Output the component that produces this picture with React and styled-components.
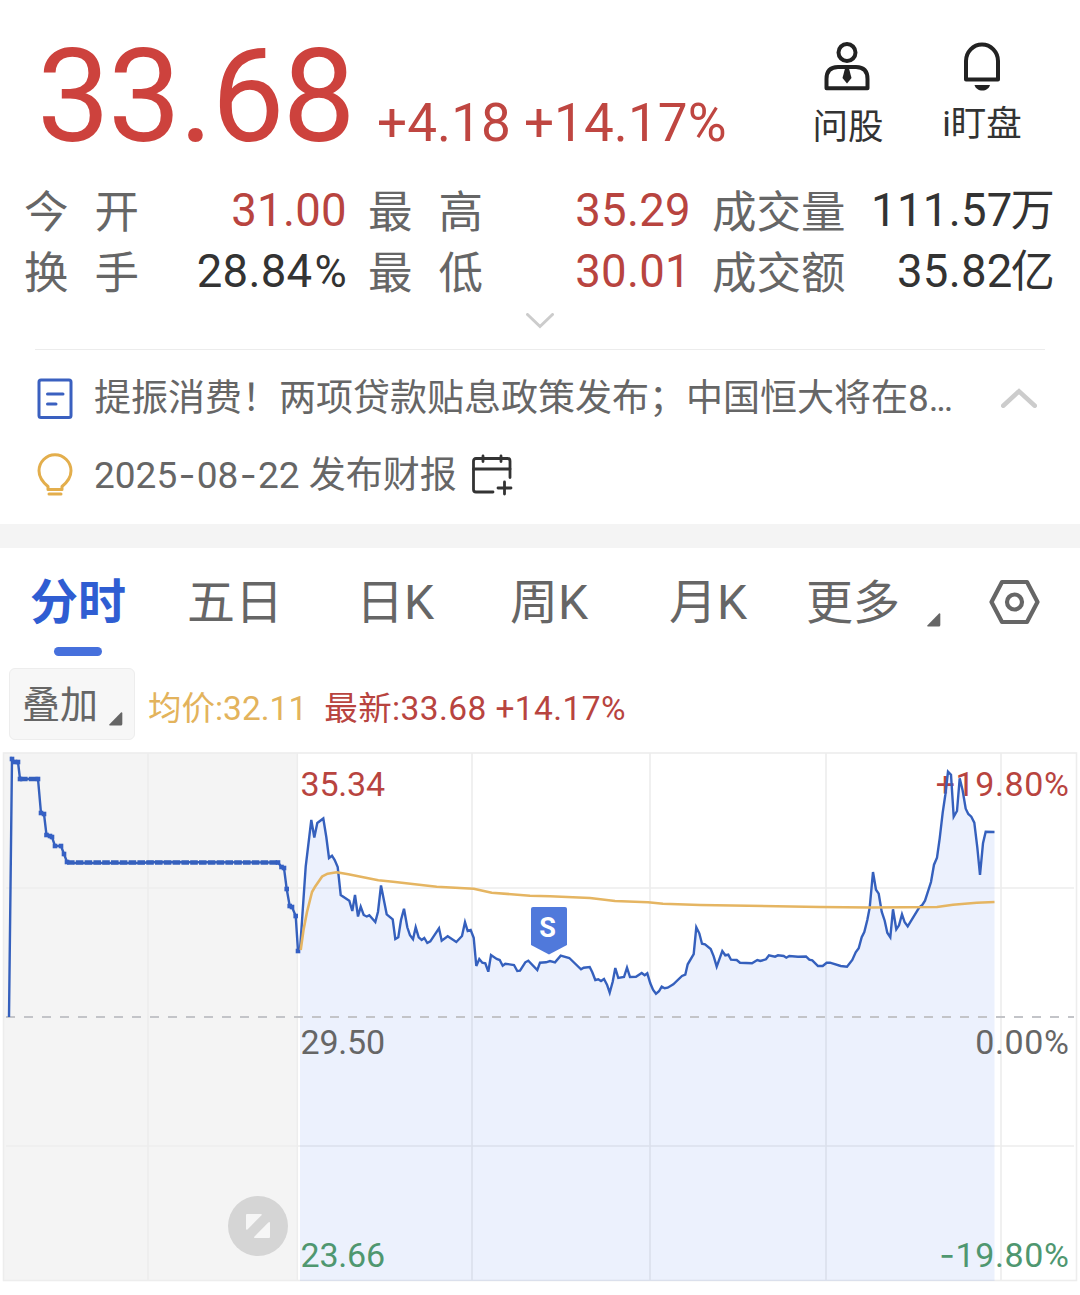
import React from "react";
import styled, { createGlobalStyle } from "styled-components";

const GlobalStyle = createGlobalStyle`
    * {
        box-sizing: border-box;
    }
    body {
        margin: 0;
        background: #fff;
        font-family: Roboto, "Noto Sans CJK SC", sans-serif;
        color: #666;
    }
    svg {
        display: block;
        flex-shrink: 0;
    }
`;

const RED = "#b8443f";

const stats = [
    [
        { label: "今开", value: "31.00", up: true },
        { label: "换手", value: "28.84", unit: "%" },
    ],
    [
        { label: "最高", value: "35.29", up: true },
        { label: "最低", value: "30.01", up: true },
    ],
    [
        { label: "成交量", value: "111.57", unit: "万" },
        { label: "成交额", value: "35.82", unit: "亿" },
    ],
];

const tabs = [
    { name: "分时", width: 157, active: true },
    { name: "五日", width: 169 },
    { name: "日K", width: 154 },
    { name: "周K", width: 159 },
    { name: "月K", width: 137 },
];

// pre-market auction
const auction = [
    [9, 1017], [12, 759], [15, 762], [18, 762], [20, 779], [38, 779],
    [41, 813], [44, 814], [46.5, 835], [50, 836], [52, 837], [55, 846],
    [61, 846], [64, 854], [67, 862], [74, 863], [144, 863], [148, 862], [278, 862.5],
    [281.5, 867], [284, 868], [286.7, 889], [289.7, 906], [292, 907],
    [295.7, 916], [298, 951],
];

const auctionDots = auction.filter(([x]) => x > 9 && (x < 70 || x > 270));

const price = [
    [300, 950], [305.7, 866.7], [311.3, 820], [314.3, 837.5], [317.3, 823],
    [323.3, 818.5], [326.3, 837], [329, 858], [332, 855.7], [334.7, 860],
    [337.7, 867], [340.7, 895], [349.3, 900.7], [352.3, 911], [355, 895],
    [358, 916.5], [360.7, 906.7], [363.7, 915], [366.7, 916.5], [369.3, 915.3],
    [375.3, 922], [378, 911.7], [381, 885.5], [386.7, 914.3], [392.7, 919.3],
    [395.3, 939], [398.3, 937.3], [401, 920], [404, 908.7], [407.3, 927.3],
    [410, 935.3], [413, 939.3], [415.7, 927.3], [418.7, 937.3], [421.7, 940],
    [424.3, 938], [427.3, 943], [430.3, 941.3], [439, 928.3], [441.7, 940.7],
    [447.7, 936.3], [456.3, 942], [462, 936], [465, 922.3], [467.7, 931],
    [470.7, 930], [473.7, 937.7], [476.3, 966], [479.3, 959], [482.3, 962.7],
    [485.3, 963.3], [488.3, 971.7], [491, 955], [496.7, 959], [499.7, 960],
    [502.7, 965.7], [505.3, 963.7], [514, 965], [517.3, 971], [520, 970.7],
    [525.3, 962.3], [528.3, 960.7], [537.3, 970], [540, 962.7], [546, 962.3],
    [550, 961], [555, 962.3], [560.7, 955.7], [569.3, 958], [581, 969.3],
    [583.7, 967.7], [589.7, 967], [592.3, 972.3], [595.3, 980], [598.3, 979.3],
    [601, 981], [604, 979], [607, 984.7], [609.7, 992.7], [612.7, 981.7],
    [615.3, 968], [618.3, 978], [624, 977], [627, 967.7], [630, 977],
    [636, 976.7], [641.7, 973], [644.7, 975.3], [647.3, 973.3], [650.3, 983.3],
    [653, 989.7], [656, 993.7], [659, 991.3], [661.7, 986.7], [664.7, 988.3],
    [667.7, 987.7], [673.3, 984.3], [682, 976], [685.3, 974.7], [687.7, 964.3],
    [693.7, 954], [696.3, 927.3], [699.3, 933.3], [702, 943.7], [705, 944.3],
    [710.7, 949], [713.7, 956.3], [716.7, 966.7], [722.3, 951], [725.3, 955.3],
    [728.3, 954.7], [731, 959.7], [736.7, 960], [740, 962.7], [752, 963.3],
    [757.3, 960], [760.3, 961], [766, 959.3], [769, 955.3], [775, 956.7],
    [778, 955.3], [783.7, 956], [786.3, 957.7], [789.3, 956], [798, 956.7],
    [806, 956.5], [809.3, 959.7], [812.3, 960.3], [818, 966], [822.7, 966],
    [826.7, 962.7], [830, 962.7], [840.7, 966], [847, 966.7], [852.3, 960],
    [855.7, 952.3], [858.7, 948.3], [861.7, 937.3], [864.3, 932], [867.3, 920],
    [869.7, 907.7], [873, 872], [876, 889.7], [878.7, 893.7], [881.7, 911.7],
    [884.7, 920.7], [887.3, 932.7], [890.3, 937.3], [893, 909.3], [896.3, 929.3],
    [899, 925.3], [902, 914.3], [904.7, 922.3], [907.7, 926.3], [919.3, 907.3],
    [922.3, 905], [925, 900.7], [931, 882], [934, 864.7], [937, 857.7],
    [939.7, 838.3], [942.7, 812.7], [945.3, 795], [948, 771.7], [951, 774.7],
    [953.7, 816.7], [957, 811], [959.7, 778.3], [962.7, 790.7], [965.7, 808.7],
    [968.3, 814], [971.3, 816.7], [974.3, 822.7], [977.3, 847.3], [980, 875],
    [983, 843.3], [985.7, 831.7], [994.5, 832],
];

const average = [
    [300.7, 950], [303.5, 930], [307, 912], [312, 892], [314.7, 887.3], [322.3, 876.3],
    [327.7, 873.7], [336.7, 872.3], [348.3, 874.3], [378.3, 880.3],
    [393, 881.7], [436.7, 886.7], [473.7, 888.7], [491.7, 892.7], [530, 895.7],
    [550, 896.3], [590, 898], [615, 901], [648, 902.3], [663, 903.7],
    [700, 905], [820, 907], [870, 907.5], [937, 907], [953, 904.7],
    [976.7, 902.7], [994.5, 902],
];

const toPoints = (list) => list.map((p) => p.join(",")).join(" ");

const AdvisorIcon = () => (
    <svg width="50" height="50" viewBox="0 0 50 50" fill="none" stroke="#222" strokeWidth="4">
        <circle cx="24" cy="10.500" r="8.500" />
        <path d="M3.500 46.300V37Q3.500 25 15 25H33Q44.500 25 44.500 37V46.300Z" strokeLinejoin="round" />
        <path d="M22 26.500h4l2.500 9.500-4.500 5.500-4.500-5.500z" fill="#222" stroke="none" />
    </svg>
);

const BellIcon = () => (
    <svg width="48" height="50" viewBox="0 0 48 50" fill="none" stroke="#222" strokeWidth="4">
        <path d="M8 37.500V19a16 16.500 0 0 1 32 0V37.500z" strokeLinejoin="round" />
        <path d="M16.500 43h15.500c-1 3.600-4 5.500-7.700 5.500s-6.800-1.900-7.800-5.500z" fill="#222" stroke="none" />
    </svg>
);

const NewsIcon = () => (
    <svg width="36" height="42" viewBox="0 0 36 42" fill="none" stroke="#3a60c0" strokeWidth="3">
        <rect x="2" y="2" width="32" height="37.500" rx="2" />
        <path d="M10.500 16h15.500M10.500 26h8.500" strokeLinecap="round" />
    </svg>
);

const BulbIcon = () => (
    <svg width="36" height="44" viewBox="0 0 36 44" fill="none" stroke="#e3ae4c" strokeWidth="3">
        <path d="M11 36.500v-3C6 29.500 2 25 2 17.800a16 16 0 0 1 32 0C34 25 30 29.500 25 33.500v3z" strokeLinejoin="round" />
        <path d="M12 41h12" strokeLinecap="round" />
    </svg>
);

const CalendarIcon = () => (
    <svg width="42" height="42" viewBox="0 0 42 42" fill="none" stroke="#333" strokeWidth="2.800" strokeLinecap="round">
        <path d="M39 23.500V7q0-2.500-2.500-2.500H5Q2.500 4.500 2.500 7V35.500q0 2.500 2.500 2.500H22" />
        <path d="M2.500 15h36.500M12 2v5.500M30 2v5.500M33.500 28v12M27 34h13" />
    </svg>
);

const SettingsIcon = () => (
    <svg width="52" height="48" viewBox="0 0 52 48" fill="none" stroke="#666" strokeWidth="4.200">
        <path d="M13 4h25L48.500 24 38 44H13L2.500 24z" strokeLinejoin="round" />
        <circle cx="25.500" cy="24" r="7.500" />
    </svg>
);

const Chevron = ({ width, height, stroke, up }) => (
    <svg width={width} height={height} viewBox={`0 0 ${width} ${height}`} fill="none" stroke="#ccc" strokeWidth={stroke} strokeLinecap="round">
        <path
            d={
                up
                    ? `M${stroke / 2} ${height - stroke / 2}L${width / 2} ${stroke / 2 + 1}L${width - stroke / 2} ${height - stroke / 2}`
                    : `M${stroke / 2} ${stroke / 2}L${width / 2} ${height - stroke / 2 - 1}L${width - stroke / 2} ${stroke / 2}`
            }
        />
    </svg>
);

const Corner = () => (
    <svg width="14" height="14" viewBox="0 0 14 14">
        <path d="M12 .5q1.300-.8 1.300.8V12q0 1.500-1.500 1.500H1Q-.5 13.500.5 12.300z" fill="#666" />
    </svg>
);

const Chart = () => (
    <svg width="1080" height="547" viewBox="0 748 1080 547">
        <rect x="3" y="753" width="294" height="528" fill="#f4f4f4" />
        <g stroke="#ededed" strokeWidth="1.600" fill="none">
            <rect x="3.500" y="753" width="1073" height="527.500" />
            <path d="M6 888H1074M6 1146H1074" />
            <path d="M148 753V1280M297.300 753V1280M472 753V1280M650 753V1280M826 753V1280M1001 753V1280" />
        </g>
        <polygon points={`300,1281 ${toPoints(price)} 994.5,1281`} fill="#3a66ee" fillOpacity="0.095" />
        <path d="M6 1017H1074" stroke="#c3c4c8" strokeWidth="2" strokeDasharray="9 9" />

        <AxisText x="300.500" y="795.500" fill={RED}>35.34</AxisText>
        <AxisText x="300.500" y="1053.500" fill="#666">29.50</AxisText>
        <AxisText x="300.500" y="1266.500" fill="#4f9770">23.66</AxisText>
        <AxisText x="1069.500" y="795.500" fill={RED} $end>+19.80%</AxisText>
        <AxisText x="1069.500" y="1053.500" fill="#666" $end>0.00%</AxisText>
        <AxisText x="1069.500" y="1266.500" fill="#4f9770" $end>
            <tspan fontFamily="Inter">-</tspan>19.80%
        </AxisText>

        <g fill="none" stroke="#3560bd" strokeWidth="2.400">
            <polyline points={toPoints(auction)} />
            <path d="M67 862.500H278M20 779H38" strokeWidth="4.600" strokeDasharray="7.600 1.200" />
            <polyline points={toPoints(price)} />
        </g>
        {auctionDots.map(([x, y]) => (
            <rect key={x} x={x - 2.3} y={y - 2.3} width="4.600" height="4.600" fill="#3560c4" />
        ))}
        <polyline points={toPoints(average)} fill="none" stroke="#e5b562" strokeWidth="2.600" strokeLinejoin="round" />

        <path d="M533 907h32q2 0 2 2v36l-18 9.500-18-9.500v-36q0-2 2-2z" fill="#5079db" />
        <MarkerText x="547.500" y="937" textAnchor="middle">S</MarkerText>

        <circle cx="258" cy="1226" r="30" fill="#d5d5d5" />
        <path d="M247 1214h14q1.500 0 .5 1.200l-13.800 14q-1.700 1.300-1.700-.7V1215q0-1 1-1z" fill="#f6f6f6" />
        <path d="M270 1223v14q0 1-1 1h-14q-1.500 0-.5-1.500l13.800-14q1.700-1.300 1.700.5z" fill="#f6f6f6" />
    </svg>
);

const App = () => {
    return (
        <Page>
            <GlobalStyle />
            <Header>
                <Quote>
                    <Price>33.68</Price>
                    <Change>+4.18</Change>
                    <Change>+14.17%</Change>
                </Quote>
                <Actions>
                    <Action $gap={15}>
                        <AdvisorIcon />
                        <span>问股</span>
                    </Action>
                    <Action $gap={12}>
                        <BellIcon />
                        <span>i盯盘</span>
                    </Action>
                </Actions>
            </Header>

            <Stats>
                {stats.map((column, i) => (
                    <div key={i}>
                        {column.map((item) => (
                            <StatRow key={item.label}>
                                <StatLabel>
                                    {[...item.label].map((char) => (
                                        <span key={char}>{char}</span>
                                    ))}
                                </StatLabel>
                                <StatValue $up={item.up}>
                                    {item.value}
                                    {item.unit && <Unit $wide={item.unit === "%"}>{item.unit}</Unit>}
                                </StatValue>
                            </StatRow>
                        ))}
                    </div>
                ))}
            </Stats>
            <Expand>
                <Chevron width={28} height={16} stroke={3} />
            </Expand>

            <Notices>
                <Notice $height={78}>
                    <NewsIcon />
                    <NoticeText>
                        提振消费！两项贷款贴息政策发布；中国恒大将在8<Dots>...</Dots>
                    </NoticeText>
                    <Collapse>
                        <Chevron up width={36} height={20} stroke={4.5} />
                    </Collapse>
                </Notice>
                <Notice $height={74}>
                    <BulbIcon />
                    <NoticeText>
                        2025<Dash>-</Dash>08<Dash>-</Dash>22 发布财报
                    </NoticeText>
                    <CalendarIcon />
                </Notice>
            </Notices>
            <Band />

            <Tabs>
                {tabs.map((tab) => (
                    <Tab key={tab.name} $width={tab.width} $active={tab.active}>
                        {tab.name}
                    </Tab>
                ))}
                <More>
                    更多
                    <Corner />
                </More>
                <SettingsIcon />
            </Tabs>

            <Legend>
                <OverlayButton>
                    叠加
                    <Corner />
                </OverlayButton>
                <LegendText $color="#e3b35c">均价:32.11</LegendText>
                <LegendText $color={RED} $spacing={0.4}>
                    最新:33.68 +14.17%
                </LegendText>
            </Legend>
            <Chart />
        </Page>
    );
};

const Page = styled.div`
    width: 1080px;
    height: 1295px;
    overflow: hidden;
    background: #fff;
`;

const Header = styled.div`
    display: flex;
    justify-content: space-between;
    height: 180px;
    padding: 31px 48px 0 37px;
`;

const Quote = styled.div`
    display: flex;
    align-items: baseline;
    height: 130px;
    white-space: nowrap;
`;

const Price = styled.div`
    width: 340px;
    font-size: 130px;
    line-height: 131px;
    letter-spacing: -2px;
    color: #cd423d;
`;

const Change = styled.div`
    margin-right: 13px;
    font-size: 53px;
    line-height: 60px;
    letter-spacing: 0.1px;
    color: #bf4641;
`;

const Actions = styled.div`
    display: flex;
    gap: 34px;
    padding-top: 11px;
`;

const Action = styled.div`
    display: flex;
    flex-direction: column;
    align-items: center;
    width: 100px;
    color: #333;
    font-size: 35.5px;
    line-height: 40px;
    span {
        margin-top: ${({ $gap }) => $gap}px;
    }
`;

const Stats = styled.div`
    display: grid;
    grid-template-columns: 323px 323px 343px;
    column-gap: 21px;
    padding-left: 24px;
`;

const StatRow = styled.div`
    display: flex;
    justify-content: space-between;
    height: 61px;
    line-height: 62px;
    white-space: nowrap;
`;

const StatLabel = styled.div`
    display: flex;
    justify-content: space-between;
    min-width: 115px;
    padding-top: 2px;
    font-size: 44.5px;
`;

const StatValue = styled.div`
    font-size: 45.5px;
    letter-spacing: 0.3px;
    color: ${({ $up }) => ($up ? RED : "#333")};
`;

const Unit = styled.span`
    margin-left: ${({ $wide }) => ($wide ? 2 : -2)}px;
    font-size: 44px;
`;

const Expand = styled.div`
    display: flex;
    justify-content: center;
    height: 47px;
    padding-top: 11px;
`;

const Notices = styled.div`
    height: 175px;
    margin: 0 35px;
    border-top: 1px solid #ececec;
    padding-top: 10px;
`;

const Notice = styled.div`
    display: flex;
    align-items: center;
    height: ${({ $height }) => $height}px;
    padding-left: 2px;
`;

const NoticeText = styled.div`
    margin: 0 14px 0 21px;
    font-size: 37px;
    line-height: 50px;
    white-space: nowrap;
`;

const Dash = styled.span`
    margin: 0 1.3px;
    font-family: Inter;
`;

const Dots = styled.span`
    letter-spacing: -2.3px;
`;

const Collapse = styled.div`
    margin-left: auto;
    padding: 0 8px 2px 0;
`;

const Band = styled.div`
    height: 24px;
    background: #f4f4f4;
`;

const Tabs = styled.div`
    display: flex;
    align-items: flex-start;
    height: 120px;
    padding: 30px 0 0 30px;
    font-size: 48px;
    line-height: 50px;
    white-space: nowrap;
`;

const Tab = styled.div`
    width: ${({ $width }) => $width}px;
    ${({ $active }) =>
        $active &&
        `
        color: #2f5dd2;
        font-weight: 700;
        &::after {
            content: "";
            display: block;
            width: 48px;
            height: 9px;
            margin: 19px 0 0 24px;
            border-radius: 5px;
            background: #4670dc;
        }
    `}
`;

const More = styled.div`
    display: flex;
    justify-content: space-between;
    width: 135px;
    margin-right: 48px;
    font-size: 47px;
    svg {
        margin-top: 35px;
    }
`;

const Legend = styled.div`
    display: flex;
    height: 80px;
    padding-left: 9px;
`;

const OverlayButton = styled.div`
    display: flex;
    justify-content: space-between;
    width: 126px;
    height: 72px;
    padding: 0 11px 0 12px;
    border: 1px solid #ededed;
    border-radius: 6px;
    background: #f7f7f7;
    font-size: 38px;
    line-height: 72px;
    svg {
        margin-top: 43px;
    }
`;

const LegendText = styled.div`
    margin: 0 4px 0 13px;
    font-size: 33.5px;
    line-height: 81px;
    letter-spacing: ${({ $spacing = 0 }) => $spacing}px;
    white-space: nowrap;
    color: ${({ $color }) => $color};
`;

const AxisText = styled.text`
    font-size: 34px;
    letter-spacing: ${({ $end }) => ($end ? 0.6 : -0.2)}px;
    text-anchor: ${({ $end }) => ($end ? "end" : "start")};
`;

const MarkerText = styled.text`
    font-size: 27px;
    font-weight: 700;
    fill: #fff;
`;

export default App;
